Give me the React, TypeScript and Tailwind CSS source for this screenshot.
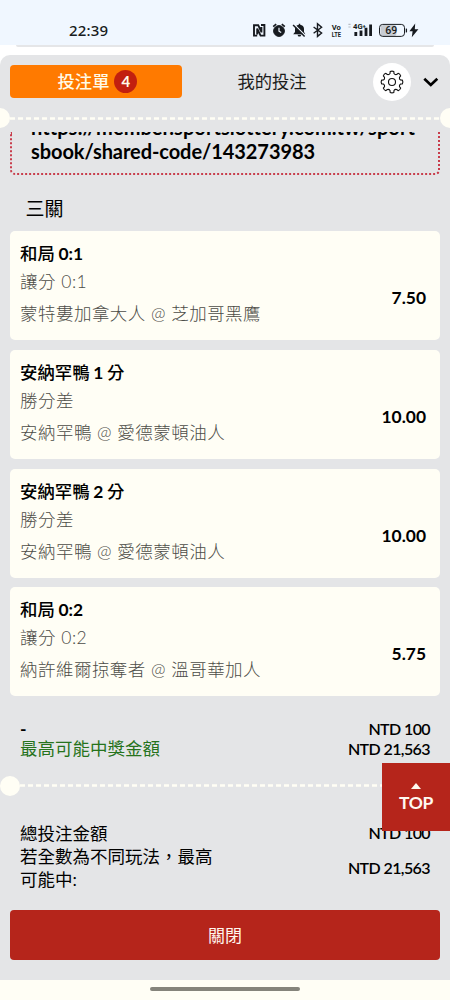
import React from "react";

type Bet = { title: string; market: string; match: string; odds: string };

const bets: Bet[] = [
  { title: "和局 0:1", market: "讓分 0:1", match: "蒙特婁加拿大人 @ 芝加哥黑鷹", odds: "7.50" },
  { title: "安納罕鴨 1 分", market: "勝分差", match: "安納罕鴨 @ 愛德蒙頓油人", odds: "10.00" },
  { title: "安納罕鴨 2 分", market: "勝分差", match: "安納罕鴨 @ 愛德蒙頓油人", odds: "10.00" },
  { title: "和局 0:2", market: "讓分 0:2", match: "納許維爾掠奪者 @ 溫哥華加人", odds: "5.75" },
];

function StatusIcons() {
  return (
    <svg className="block" width="172" height="18" viewBox="250 21 172 18" fill="none" stroke="#171b20">
      {/* NFC */}
      <path d="M257.2 35.6H254V25.2H258.2L261.4 31.8M261 25H264.4V35.6H260.6L257.2 28.6V34.5M261.4 27V32.4" strokeWidth="1.9" />
      {/* alarm */}
      <circle cx="279" cy="31" r="5.4" fill="#171b20" strokeWidth="1" />
      <path d="M273.2 26.6L276.2 24.2M281.8 24.2L284.8 26.6" strokeWidth="1.7" />
      <path d="M279 27.8V31.2L281.2 32.6" stroke="#f0f7ff" strokeWidth="1.2" />
      {/* muted bell */}
      <path d="M293.2 34.2L295 32V28.8C295 26.5 296.6 25.1 298.8 24.8V23.8H300.2V24.8C302.4 25.1 304 26.6 304 28.8V32L305.4 34.2Z" fill="#171b20" stroke="none" />
      <path d="M297.4 34.8H301.4L300.4 36.4H298.4Z" fill="#171b20" stroke="none" />
      <path d="M294.2 24.4L305.2 35.4" stroke="#f0f7ff" strokeWidth="1.4" />
      <path d="M293.1 25L304.6 36.5" strokeWidth="1.5" />
      {/* bluetooth */}
      <path d="M313.6 27L321.6 33L317.5 36.4V23.8L321.6 27.2L313.6 33.2" strokeWidth="1.4" />
      {/* signal bars */}
      <path d="M355.8 32V36M361 30.6V36M366 27.8V36M370.6 24.4V36" strokeWidth="2.8" />
      <path d="M348.4 24.3H350.6M348.4 27H350.6" stroke="#b7bdc4" strokeWidth="1.2" />
      {/* battery */}
      <rect x="380.5" y="25" width="16" height="11.2" rx="3" fill="#c7ccd3" stroke="none" />
      <rect x="379.5" y="24.4" width="25" height="12" rx="3.2" strokeWidth="1" />
      <path d="M406.4 28.6V32.4" strokeWidth="1.3" />
      <path d="M415.2 23.6L409.4 31.2H412.6L411.8 37.2L418.4 29.2H414.8Z" fill="#171b20" stroke="none" />
      <g fill="#171b20" stroke="none" fontFamily="Roboto, sans-serif" fontWeight="700">
        <text x="336.2" y="29.7" fontSize="7.6" textAnchor="middle">Vo</text>
        <text x="331.7" y="36.6" fontSize="7.6" textLength="9.2" lengthAdjust="spacingAndGlyphs">LTE</text>
        <text x="353" y="29.2" fontSize="8" textLength="9.6" lengthAdjust="spacingAndGlyphs">4G</text>
        <text x="362.4" y="28" fontSize="6">+</text>
        <text x="391.3" y="34.2" fontSize="10.6" fontWeight="500" textAnchor="middle">69</text>
      </g>
    </svg>
  );
}

function Gear() {
  const outline = Array.from({ length: 8 }, (_, i) => {
    const at = (r: number, deg: number) => {
      const a = ((i * 45 + deg - 90) * Math.PI) / 180;
      return `${(12 + r * Math.cos(a)).toFixed(2)} ${(12 + r * Math.sin(a)).toFixed(2)}`;
    };
    return `${i ? "L" : "M"}${at(8.8, -13)}L${at(10.6, -10)}Q${at(11.3, 0)} ${at(10.6, 10)}L${at(8.8, 13)}Q${at(7.6, 22.5)} ${at(8.8, 32)}`;
  }).join("");
  return (
    <svg width="24" height="24" viewBox="0 0 24 24" fill="none" stroke="#111" strokeWidth="1.1" strokeLinejoin="round">
      <path d={outline + "Z"} />
      <circle cx="12" cy="12" r="3.5" />
    </svg>
  );
}

function Dashes() {
  return (
    <svg className="block h-[3px] w-full">
      <line x1="0" y1="1.5" x2="100%" y2="1.5" stroke="#fffef5" strokeWidth="2.6" strokeDasharray="5 3" />
    </svg>
  );
}

function MixedTitle({ text }: { text: string }) {
  return (
    <>
      {text.split(/([0-9:]+)/).map((part, i) =>
        i % 2 ? (
          <b key={i} className="font-bold">{part}</b>
        ) : (
          <React.Fragment key={i}>{part}</React.Fragment>
        ),
      )}
    </>
  );
}

function BetCard({ bet }: { bet: Bet }) {
  return (
    <article className="flex h-[109px] shrink-0 items-start justify-between rounded-[5px] bg-[#fffef5] pl-[10px] pr-[14px]">
      <div className="pt-[9px]">
        <h3 className="h-[28px] text-[17.4px] leading-[27px] font-medium [word-spacing:-0.7px] text-black">
          <MixedTitle text={bet.title} />
        </h3>
        <p className="h-[28px] text-[17.5px] leading-[28px] font-light tracking-[0.5px] text-[#4c4c47]">{bet.market}</p>
        <p className="mt-[3px] h-[30px] text-[17.5px] leading-[30px] font-light tracking-[0.47px] text-[#4c4c47]">{bet.match}</p>
      </div>
      <span className="pt-[53px] text-[17.4px] leading-[27px] font-bold text-black">{bet.odds}</span>
    </article>
  );
}

export default function App() {
  return (
    <div className="relative flex h-[1000px] w-[450px] flex-col overflow-hidden bg-white font-['Lato','Noto_Sans_CJK_TC',sans-serif] text-black">
      <div className="flex h-[45px] shrink-0 items-start justify-between bg-[#f0f7ff] pt-[21px] pr-[28px] pl-[69px]">
        <span className="font-['Noto_Sans',sans-serif] text-[15px] leading-[18px] font-medium tracking-[0.2px] text-[#171b20]">22:39</span>
        <StatusIcons />
      </div>
      <div className="h-[10px] shrink-0 px-4">
        <div className="h-[2px] rounded-b bg-[#e5e6e8]" />
      </div>

      <header className="h-[77px] shrink-0 rounded-t-[10px] bg-[#e4e5e7]">
        <div className="flex h-[53px] items-center pl-[10px]">
          <button className="flex h-[33px] w-[172px] items-center justify-center gap-[5px] rounded-[4px] bg-[#ff7a00] pl-[3px] text-[17.3px] font-medium text-[#fffbe8]">
            投注單
            <span className="flex h-[23px] w-[23px] items-center justify-center rounded-full bg-[#c2200f] text-[15px] font-bold">4</span>
          </button>
          <span className="w-[180px] text-center text-[17.3px] text-[#1b1b1b]">我的投注</span>
          <button className="ml-[11px] flex h-[38px] w-[38px] items-center justify-center rounded-full bg-white">
            <Gear />
          </button>
          <svg className="ml-[12px]" width="16" height="12" viewBox="0 0 16 12" fill="none" stroke="#000" strokeWidth="2.7">
            <path d="M1.3 2.8L7.8 9L14.3 2.8" />
          </svg>
        </div>
        <div className="-mx-[10px] flex h-[20px] items-center">
          <i className="h-[20px] w-[20px] shrink-0 rounded-full bg-[#fffef5]" />
          <Dashes />
          <i className="h-[20px] w-[20px] shrink-0 rounded-full bg-[#fffef5]" />
        </div>
      </header>

      <main className="flex h-[848px] shrink-0 flex-col overflow-hidden bg-[#e4e5e7]">
        <div className="mx-[10px] flex h-[43px] shrink-0 flex-col justify-end rounded-b-[5px] border-x-[2px] border-b-[2px] border-dotted border-[#c83d4c] pb-[10px] pl-[19px] text-[20px] leading-[24px] font-bold whitespace-nowrap">
          <span className="tracking-[0.05px]">https://member.sportslottery.com.tw/sport</span>
          <span className="tracking-[-0.07px]">sbook/shared-code/143273983</span>
        </div>
        <h2 className="mt-[18px] h-[30px] shrink-0 pl-[25.5px] text-[19px] leading-[31px]">三關</h2>
        <section className="mt-[8px] flex shrink-0 flex-col gap-[9.8px] px-[10px]">
          {bets.map((bet, i) => (
            <BetCard key={i} bet={bet} />
          ))}
        </section>

        <section className="mt-[22.4px] flex h-[40px] shrink-0 justify-between px-5 text-[17.5px] leading-[20px]">
          <div>
            <p className="font-bold">-</p>
            <p className="text-[#26731c]">最高可能中獎金額</p>
          </div>
          <div className="text-right text-[16px] font-semibold tracking-[-0.6px]">
            <p>NTD 100</p>
            <p>NTD 21,563</p>
          </div>
        </section>
        <div className="mt-[17px] flex h-[20px] shrink-0 items-center">
          <i className="h-[20px] w-[20px] shrink-0 rounded-full bg-[#fffef5]" />
          <Dashes />
        </div>
        <section className="mt-[26.6px] flex h-[69px] shrink-0 flex-col px-5 text-[17.5px] leading-[23px]">
          <div className="flex justify-between">
            <p>總投注金額</p>
            <p className="-mt-px text-[16px] font-semibold tracking-[-0.6px]">NTD 100</p>
          </div>
          <div className="flex items-center justify-between">
            <p className="w-[196px]">若全數為不同玩法，最高可能中:</p>
            <p className="-mt-[2px] text-[16px] font-semibold tracking-[-0.6px]">NTD 21,563</p>
          </div>
        </section>
        <button className="mx-[10px] mt-[19px] h-[50px] shrink-0 rounded-[4px] bg-[#b5251b] text-[17px] text-[#fff6ee]">關閉</button>
      </main>
      <footer className="flex h-[20px] shrink-0 justify-center bg-[#fffef5] pt-[7px]">
        <div className="h-[4px] w-[150px] rounded-full bg-[#85847b]" />
      </footer>

      <button className="absolute top-[763px] right-0 flex h-[68px] w-[68px] flex-col items-center bg-[#b5251b] pt-[20px] text-[17.5px] leading-[28px] font-bold tracking-[-0.4px] text-[#fff8f0]">
        <svg className="block shrink-0" width="10" height="6" viewBox="0 0 10 6">
          <path d="M0 6L5 0L10 6Z" fill="#fff8f0" />
        </svg>
        TOP
      </button>
    </div>
  );
}
